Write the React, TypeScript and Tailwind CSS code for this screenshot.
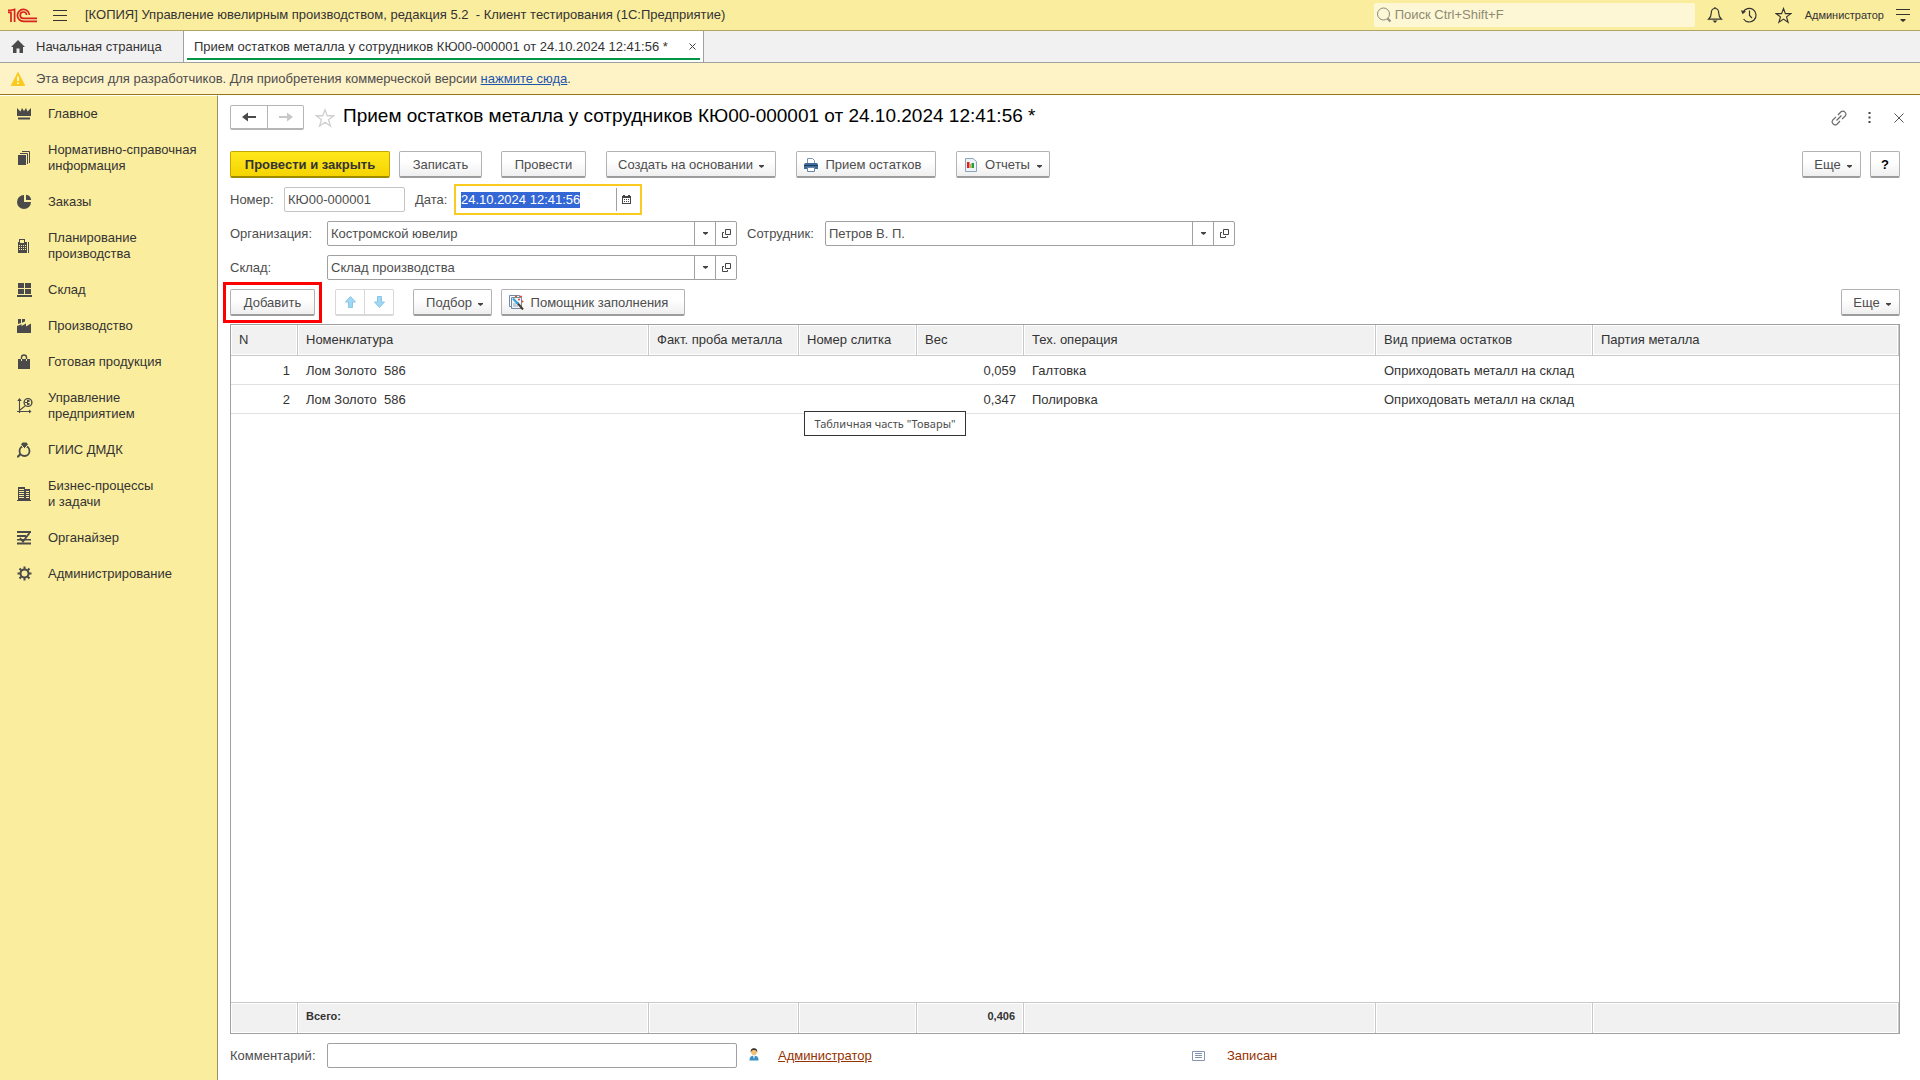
import { useEffect, useRef, type ReactNode } from 'react';

const svgProps = { fill: 'none', xmlns: 'http://www.w3.org/2000/svg' };

function Logo() {
  return (
    <svg {...svgProps} className="h-[15px] w-[30px]" viewBox="0 0 30 15" stroke="#d8231f" strokeWidth="1.7">
      <path d="M0 4.4H3V14M6.6 14V0.5M6.6 1C5.6 2.2 3.5 2.4 0 2.4" />
      <path d="M21.4 7A6 6 0 1 0 15.4 13.4H29" />
      <path d="M18.6 7A3.2 3.2 0 1 0 15.4 10.4H29" />
    </svg>
  );
}

function Caret() {
  return (
    <svg {...svgProps} className="mt-[3px] h-[3px] w-[5px] shrink-0" viewBox="0 0 5 3">
      <path d="M0 0H5V1L2.5 3L0 1Z" fill="#444" />
    </svg>
  );
}

function Star({ className, stroke }: { className: string; stroke: string }) {
  return (
    <svg {...svgProps} className={className} viewBox="0 0 18 18" stroke={stroke} strokeWidth="1.2">
      <path d="M9 1.6L11 7H16.8L12.2 10.5L13.9 16.2L9 12.8L4.1 16.2L5.8 10.5L1.2 7H7Z" />
    </svg>
  );
}

const sectionIcons: Record<string, ReactNode> = {
  crown: <path d="M0 2L3.5 5.5L5 2L7 5L9 2L10.5 5.5L14 2V10H0ZM1 11.5H13V13.5H1Z" />,
  books: (
    <>
      <path d="M1 5H9V15H1Z" />
      <path d="M3 3.5H10.5V14M5 1.5H12.5V13" fill="none" stroke="#4a4a4a" />
    </>
  ),
  pie: <path d="M7 1A7 7 0 1 0 14 8H7ZM9 0.8V6H14.2A6 6 0 0 0 9 0.8Z" />,
  calc: (
    <>
      <path
        fillRule="evenodd"
        d="M2 1H8V4H10V15H1V4H2ZM3 2V5H7V2ZM2 7V8H3V7ZM4 7V8H5V7ZM6 7V8H7V7ZM8 7V8H9V7ZM2 9V10H3V9ZM4 9V10H5V9ZM6 9V10H7V9ZM8 9V10H9V9ZM2 11V12H3V11ZM4 11V12H5V11ZM6 11V12H7V11ZM8 11V12H9V11Z"
      />
      <path d="M11 4H12V15H11Z" />
    </>
  ),
  boxes: <path d="M1 1H7V6H1ZM8 1H14V6H8ZM1 7H7V12H1ZM8 7H14V12H8ZM0 13H15V15H0Z" />,
  factory: <path d="M0 15V8L4.5 6.3V8L9 5.5V8.5L14 5.5V15ZM1 1H4V5L1 6ZM5 1H8V3.5L5 4.8Z" />,
  bag: (
    <>
      <path d="M1 5H13V15H1Z" />
      <path d="M4.5 5V3.5A2.5 2.5 0 0 1 9.5 3.5V5" fill="none" stroke="#4a4a4a" strokeWidth="1.4" />
      <path d="M4.5 5V7M9.5 5V7" stroke="#fbed9e" />
    </>
  ),
  chart: (
    <>
      <path d="M2.5 15V2M0 13.5H13M3 12L8 8" fill="none" stroke="#4a4a4a" strokeWidth="1.1" />
      <path d="M2.5 0L4.8 3H0.2ZM14.5 13.5L12 11.5V15.5Z" />
      <circle cx="11" cy="4.5" r="3.9" fill="none" stroke="#4a4a4a" strokeWidth="1.4" />
      <path d="M10 2H12.5V4H11V5H12.5V7H10ZM8 4H10V5H8Z" />
    </>
  ),
  ring: (
    <>
      <circle cx="7.5" cy="9" r="5" fill="none" stroke="#4a4a4a" strokeWidth="1.8" />
      <path d="M4.5 3.5L7.5 6.5L10.5 3.5Z" stroke="#fbed9e" />
      <path d="M5.5 0.5H9.5L11 2.5L7.5 5.5L4 2.5ZM0 14L3 11L4.5 12.5L1.5 15.5H0Z" />
    </>
  ),
  building: (
    <path
      fillRule="evenodd"
      d="M1 1H8V3H13V14H14V15H0V14H1ZM2 3V4H7V3ZM2 5V6H7V5ZM2 7V8H7V7ZM2 9V10H7V9ZM2 11V12H7V11ZM9 5V6H12V5ZM9 7V8H12V7ZM9 9V10H12V9ZM9 11V12H12V11Z"
    />
  ),
  organizer: (
    <>
      <path d="M0 1H14V3H0ZM0 5H9V7H0ZM0 9H14V10.5H0ZM0 12.5H14V14.5H0Z" />
      <path d="M3 8L6 11.5L12.5 3" fill="none" stroke="#4a4a4a" strokeWidth="1.8" />
    </>
  ),
  gear: (
    <>
      <circle cx="7.5" cy="7.5" r="4" fill="none" stroke="#4a4a4a" strokeWidth="2" />
      <path
        d="M7.5 0.5V3M7.5 12V14.5M0.5 7.5H3M12 7.5H14.5M2.5 2.5L4.3 4.3M10.7 10.7L12.5 12.5M12.5 2.5L10.7 4.3M4.3 10.7L2.5 12.5"
        stroke="#4a4a4a"
        strokeWidth="2"
      />
    </>
  ),
};

const sections: { icon: string; lines: string[] }[] = [
  { icon: 'crown', lines: ['Главное'] },
  { icon: 'books', lines: ['Нормативно-справочная', 'информация'] },
  { icon: 'pie', lines: ['Заказы'] },
  { icon: 'calc', lines: ['Планирование', 'производства'] },
  { icon: 'boxes', lines: ['Склад'] },
  { icon: 'factory', lines: ['Производство'] },
  { icon: 'bag', lines: ['Готовая продукция'] },
  { icon: 'chart', lines: ['Управление', 'предприятием'] },
  { icon: 'ring', lines: ['ГИИС ДМДК'] },
  { icon: 'building', lines: ['Бизнес-процессы', 'и задачи'] },
  { icon: 'organizer', lines: ['Органайзер'] },
  { icon: 'gear', lines: ['Администрирование'] },
];

function Btn({ children, className = '' }: { children: ReactNode; className?: string }) {
  return (
    <button
      type="button"
      className={`flex h-[27px] shrink-0 items-center justify-center whitespace-nowrap rounded-[2px] border border-b-2 border-[#b2b2b2] border-b-[#9c9c9c] bg-linear-to-b from-white from-40% to-[#efefef] pt-px ${className}`}
    >
      {children}
    </button>
  );
}

function RefField({ id, value }: { id: string; value: string }) {
  return (
    <div className="flex h-[25px] w-[410px] rounded-[2px] border border-[#a0a0a0] bg-white">
      <input id={id} defaultValue={value} className="min-w-0 flex-1 px-[3px] outline-none" />
      <button type="button" aria-label="Выбрать" className="flex w-[21px] items-center justify-center border-l border-[#a0a0a0]">
        <svg {...svgProps} className="h-[3px] w-[5px]" viewBox="0 0 5 3">
          <path d="M0 0H5V1L2.5 3L0 1Z" fill="#444" />
        </svg>
      </button>
      <button type="button" aria-label="Открыть" className="flex w-[21px] items-center justify-center border-l border-[#a0a0a0]">
        <svg {...svgProps} className="size-[9px]" viewBox="0 0 9 9" stroke="#444">
          <path d="M3.5 0.5H8.5V5.5H3.5ZM2 3.5H0.5V8.5H5.5V7" />
        </svg>
      </button>
    </div>
  );
}

const columns = [
  { title: 'N', width: 'w-[67px]' },
  { title: 'Номенклатура', width: 'w-[351px]' },
  { title: 'Факт. проба металла', width: 'w-[150px]' },
  { title: 'Номер слитка', width: 'w-[118px]' },
  { title: 'Вес', width: 'w-[107px]' },
  { title: 'Тех. операция', width: 'w-[352px]' },
  { title: 'Вид приема остатков', width: 'w-[217px]' },
  { title: 'Партия металла', width: '' },
];

const rows = [
  ['1', 'Лом Золото  586', '', '', '0,059', 'Галтовка', 'Оприходовать металл на склад', ''],
  ['2', 'Лом Золото  586', '', '', '0,347', 'Полировка', 'Оприходовать металл на склад', ''],
];

const totals = ['', 'Всего:', '', '', '0,406', '', '', ''];

export default function App() {
  const dateRef = useRef<HTMLInputElement>(null);
  useEffect(() => {
    dateRef.current?.focus();
    dateRef.current?.select();
  }, []);

  return (
    <div className="flex h-screen flex-col overflow-hidden bg-white font-['Liberation_Sans',Arial,sans-serif] text-[13px] leading-4 text-[#4d4d4d]">
      <header className="flex h-[31px] shrink-0 items-center border-b border-[#b0a565] bg-[#fbed9e] px-2 text-[#333]">
        <Logo />
        <button type="button" aria-label="Меню" className="ml-[15px]">
          <svg {...svgProps} className="h-[11px] w-[14px]" viewBox="0 0 14 11" stroke="#333">
            <path d="M0 0.5H14M0 5.5H14M0 10.5H14" />
          </svg>
        </button>
        <span className="ml-[18px] whitespace-pre">
          [КОПИЯ] Управление ювелирным производством, редакция 5.2  - Клиент тестирования (1С:Предприятие)
        </span>
        <label className="ml-auto flex h-6 w-[321px] items-center rounded-[2px] bg-[#fdf7d5] pl-[2px]">
          <svg {...svgProps} className="size-[16px] shrink-0" viewBox="0 0 16 16" stroke="#8d8a78">
            <circle cx="7.5" cy="7" r="6" />
            <path d="M11.5 11.5L14.5 14.5" strokeWidth="2" />
          </svg>
          <input
            aria-label="Поиск"
            placeholder="Поиск Ctrl+Shift+F"
            className="ml-[3px] min-w-0 flex-1 outline-none placeholder:text-[#8f8b73]"
          />
        </label>
        <button type="button" aria-label="Уведомления" className="ml-[12px]">
          <svg {...svgProps} className="size-[16px]" viewBox="0 0 16 16" stroke="#333" strokeWidth="1.2">
            <path d="M8 1.5C5 1.5 4.2 4 4.2 6.5C4.2 9.5 3 11 1.5 12.2H14.5C13 11 11.8 9.5 11.8 6.5C11.8 4 11 1.5 8 1.5ZM8 0V1.5" />
            <path d="M5.5 13.5H10.5L8 16Z" fill="#333" stroke="none" />
          </svg>
        </button>
        <button type="button" aria-label="История" className="ml-[18px]">
          <svg {...svgProps} className="size-[16px]" viewBox="0 0 16 16" stroke="#333" strokeWidth="1.2">
            <path d="M2 5.5A6.8 6.8 0 1 1 2.6 12M8.5 3.5V8.5L11 11" />
            <path d="M0 3.2L5 4.5L1.5 7.2Z" fill="#333" stroke="none" />
          </svg>
        </button>
        <button type="button" aria-label="Избранное" className="ml-[18px]">
          <Star className="size-[17px]" stroke="#333" />
        </button>
        <span className="ml-[13px] text-[11px]">Администратор</span>
        <button type="button" aria-label="Настройки" className="mr-[2px] ml-[12px]">
          <svg {...svgProps} className="h-[14px] w-[14px]" viewBox="0 0 14 14" stroke="#333">
            <path d="M0 1.5H14M0 6.5H14" />
            <path d="M4.5 11H9.5V12L7 14L4.5 12Z" fill="#333" stroke="none" />
          </svg>
        </button>
      </header>

      <nav className="flex h-8 shrink-0 border-b border-[#a0a0a0] bg-[#f1f1f1] text-[#333]">
        <a href="#home" className="flex w-[184px] items-center border-r border-[#a0a0a0] pl-[11px]">
          <svg {...svgProps} className="mr-[11px] h-[13px] w-[14px]" viewBox="0 0 14 13" fill="#4a4a4a">
            <path d="M7 0L14 7H12V13H8.5V8.5H5.5V13H2V7H0Z" />
          </svg>
          Начальная страница
        </a>
        <div className="flex border-r border-[#a0a0a0] bg-white px-[3px] pb-[2px]">
          <div className="flex items-center border-b-2 border-[#009646] pt-1 pr-[2px] pl-[7px]">
            <a href="#doc">Прием остатков металла у сотрудников КЮ00-000001 от 24.10.2024 12:41:56 *</a>
            <button type="button" aria-label="Закрыть вкладку" className="ml-[19px] p-[2px]">
              <svg {...svgProps} className="size-[7px]" viewBox="0 0 7 7" stroke="#444">
                <path d="M0.5 0.5L6.5 6.5M6.5 0.5L0.5 6.5" />
              </svg>
            </button>
          </div>
        </div>
      </nav>

      <div className="flex h-8 shrink-0 items-center border-b border-[#94791c] bg-[#fef2c7] pl-[11px]">
        <svg {...svgProps} className="mr-[11px] h-[14px] w-[14px]" viewBox="0 0 14 14">
          <path d="M7 0.5L13.7 13.5H0.3Z" fill="#fbca1e" stroke="#fbca1e" strokeLinejoin="round" />
          <path d="M7 4.5V9M7 10.5V12" stroke="#fff" strokeWidth="1.6" />
        </svg>
        <p>
          Эта версия для разработчиков. Для приобретения коммерческой версии{' '}
          <a href="#buy" className="text-[#1c55ae] underline">
            нажмите сюда
          </a>
          .
        </p>
      </div>

      <div className="flex min-h-0 flex-1">
        <aside className="w-[218px] shrink-0 border-t border-r border-t-white border-r-[#99915f] bg-[#fbed9e] text-[#333]">
          <ul>
            {sections.map((s) => (
              <li key={s.icon}>
                <a href={`#${s.icon}`} className="flex items-center py-[10px] pl-[17px]">
                  <svg {...svgProps} className="mr-[15px] size-4 shrink-0" viewBox="0 0 16 16" fill="#4a4a4a">
                    {sectionIcons[s.icon]}
                  </svg>
                  <span>
                    {s.lines.map((l) => (
                      <span key={l} className="block">
                        {l}
                      </span>
                    ))}
                  </span>
                </a>
              </li>
            ))}
          </ul>
        </aside>

        <main className="flex min-w-0 flex-1 flex-col pt-[10px] pr-5 pb-[12px] pl-3">
          <div className="flex items-center">
            <div className="flex h-[25px] rounded-[2px] border border-b-2 border-[#b5b5b5]">
              <button type="button" aria-label="Назад" className="flex w-[37px] items-center justify-center border-r border-[#b5b5b5]">
                <svg {...svgProps} className="h-[10px] w-[14px]" viewBox="0 0 14 10">
                  <path d="M14 4H6V0.5L0 5L6 9.5V6H14Z" fill="#4a4a4a" />
                </svg>
              </button>
              <button type="button" aria-label="Вперед" className="flex w-[35px] items-center justify-center">
                <svg {...svgProps} className="h-[10px] w-[14px]" viewBox="0 0 14 10">
                  <path d="M0 4H8V0.5L14 5L8 9.5V6H0Z" fill="#c8c8c8" />
                </svg>
              </button>
            </div>
            <button type="button" aria-label="В избранное" className="ml-[11px]">
              <Star className="size-5" stroke="#d0d0d0" />
            </button>
            <h1 className="ml-[8px] pb-[3px] text-[19px] leading-[22px] text-black">
              Прием остатков металла у сотрудников КЮ00-000001 от 24.10.2024 12:41:56 *
            </h1>
            <button type="button" aria-label="Ссылка" className="ml-auto">
              <svg {...svgProps} className="size-4" viewBox="0 0 16 16" stroke="#6a6a6a" strokeWidth="1.2">
                <path d="M5.5 10.5L10.5 5.5M7 5L10 1.8A3 3 0 0 1 14.2 6L11 9.2M9 11L6 14.2A3 3 0 0 1 1.8 10L5 6.8" />
              </svg>
            </button>
            <button type="button" aria-label="Действия" className="ml-[21px]">
              <svg {...svgProps} className="h-[11px] w-[3px]" viewBox="0 0 3 11" fill="#444">
                <path d="M0.5 0H2.5V2H0.5ZM0.5 4.5H2.5V6.5H0.5ZM0.5 9H2.5V11H0.5Z" />
              </svg>
            </button>
            <button type="button" aria-label="Закрыть" className="mr-[-4px] ml-[23px]">
              <svg {...svgProps} className="size-[10px]" viewBox="0 0 10 10" stroke="#555">
                <path d="M0.5 0.5L9.5 9.5M9.5 0.5L0.5 9.5" />
              </svg>
            </button>
          </div>

          <div className="mt-[21px] flex">
            <button
              type="button"
              className="h-[27px] w-[160px] rounded-[2px] border border-b-2 border-[#c2a800] border-b-[#a08b00] bg-linear-to-b from-[#ffe81a] to-[#f5d400] pt-px font-bold text-[#333]"
            >
              Провести и закрыть
            </button>
            <Btn className="ml-[9px] w-[83px]">Записать</Btn>
            <Btn className="ml-[19px] w-[85px]">Провести</Btn>
            <Btn className="ml-5 w-[170px] gap-[6px]">
              Создать на основании
              <Caret />
            </Btn>
            <Btn className="ml-5 w-[140px] gap-[7px] pr-[6px]">
              <svg {...svgProps} className="size-[14px]" viewBox="0 0 14 14">
                <path d="M3.5 6V0.5H8.5L10.5 2.5V6" fill="#fff" stroke="#7d93ac" />
                <path d="M1 5H13L14 6.5V11H0V6.5Z" fill="#3f6a96" />
                <path d="M0 7.5H14" stroke="#1d3f63" />
                <path d="M3.5 9.5H10.5V13.5H3.5Z" fill="#fff" stroke="#6a86a5" />
              </svg>
              Прием остатков
            </Btn>
            <Btn className="ml-5 w-[94px] gap-[7px]">
              <svg {...svgProps} className="size-[14px]" viewBox="0 0 14 14">
                <path d="M1.5 0.5H9L12.5 3.5V13.5H1.5Z" fill="#eef3f8" stroke="#8fa3b8" />
                <path d="M3 4H5.5V10H3Z" fill="#e02020" />
                <path d="M6 6H7V10H6Z" fill="#f0a020" />
                <path d="M7.5 5H10V10H7.5Z" fill="#20a040" />
              </svg>
              Отчеты
              <Caret />
            </Btn>
            <Btn className="ml-auto w-[59px] gap-[6px] pl-[3px]">
              Еще
              <Caret />
            </Btn>
            <Btn className="ml-[9px] w-[30px] font-bold text-black">?</Btn>
          </div>

          <div className="mt-[6px] flex items-center">
            <label htmlFor="number" className="w-[54px]">
              Номер:
            </label>
            <input
              id="number"
              defaultValue="КЮ00-000001"
              className="h-[25px] w-[121px] rounded-[2px] border border-[#c4c4c4] px-[3px] outline-none"
            />
            <label htmlFor="date" className="ml-[10px] w-[39px]">
              Дата:
            </label>
            <div className="flex h-[31px] w-[188px] border-2 border-[#fbca1e] p-[2px]">
              <input
                id="date"
                ref={dateRef}
                defaultValue="24.10.2024 12:41:56"
                className="min-w-0 flex-1 px-[3px] outline-none selection:bg-[#3367d6] selection:text-white"
              />
              <button type="button" aria-label="Календарь" className="flex w-[22px] items-center justify-center border-l border-[#a0a0a0] pr-[2px]">
                <svg {...svgProps} className="size-[9px]" viewBox="0 0 9 9">
                  <path
                    fillRule="evenodd"
                    fill="#444"
                    d="M1 0H3V1H6V0H8V1H9V9H0V1H1ZM1 3V8H8V3ZM2 4H3V5H2ZM4 4H5V5H4ZM6 4H7V5H6ZM2 6H3V7H2ZM4 6H5V7H4ZM6 6H7V7H6Z"
                  />
                </svg>
              </button>
            </div>
          </div>

          <div className="mt-[6px] flex items-center">
            <label htmlFor="org" className="w-[97px]">
              Организация:
            </label>
            <RefField id="org" value="Костромской ювелир" />
            <label htmlFor="employee" className="ml-[10px] w-[78px]">
              Сотрудник:
            </label>
            <RefField id="employee" value="Петров В. П." />
          </div>

          <div className="mt-[9px] flex items-center">
            <label htmlFor="store" className="w-[97px]">
              Склад:
            </label>
            <RefField id="store" value="Склад производства" />
          </div>

          <div className="mt-[9px] flex">
            <div className="outline-3 outline-offset-4 outline-[#f00]">
              <Btn className="w-[85px]">Добавить</Btn>
            </div>
            <div className="ml-5 flex h-[27px] rounded-[2px] border border-b-2 border-[#d8d8d8]">
              <button type="button" aria-label="Вверх" className="flex w-[29px] items-center justify-center border-r border-[#d8d8d8]">
                <svg {...svgProps} className="h-3 w-[11px]" viewBox="0 0 11 12">
                  <path d="M5.5 0.5L10.5 6H7.5V11.5H3.5V6H0.5Z" fill="#9fd8f5" stroke="#8cc4e4" />
                </svg>
              </button>
              <button type="button" aria-label="Вниз" className="flex w-[28px] items-center justify-center">
                <svg {...svgProps} className="h-3 w-[11px]" viewBox="0 0 11 12">
                  <path d="M5.5 11.5L10.5 6H7.5V0.5H3.5V6H0.5Z" fill="#9fd8f5" stroke="#8cc4e4" />
                </svg>
              </button>
            </div>
            <Btn className="ml-[19px] w-[79px] gap-[6px] pl-1">
              Подбор
              <Caret />
            </Btn>
            <Btn className="ml-[9px] w-[184px] gap-[7px] pr-[9px]">
              <svg {...svgProps} className="size-[15px]" viewBox="0 0 15 15">
                <path d="M0.5 0.5H10.5V11.5H0.5Z" fill="#fff" stroke="#6f8ba6" />
                <path d="M2.5 2.5H12.5V13.5H2.5Z" fill="#f2f6fa" stroke="#6f8ba6" />
                <path d="M4 9H7M4 11H9" stroke="#8fa8c0" />
                <path d="M8 7.5L14 14.5" stroke="#4a3a28" strokeWidth="2" />
                <path d="M4 3.5L9 9" stroke="#35a0d8" strokeWidth="2" />
                <path d="M6 1.5H8M7 0.5V2.5M11 1.5H13M12 0.5V2.5M9 4.5H11M10 3.5V5.5M12.5 6.5H14.5M13.5 5.5V7.5" stroke="#f04a28" />
              </svg>
              Помощник заполнения
            </Btn>
            <Btn className="ml-auto w-[59px] gap-[6px] pl-[3px]">
              Еще
              <Caret />
            </Btn>
          </div>

          <div className="relative mt-2 flex min-h-0 flex-1 border border-[#a0a0a0]">
            <table className="h-full w-full table-fixed border-separate border-spacing-0 text-[#333]">
              <thead>
                <tr>
                  {columns.map((c) => (
                    <th
                      key={c.title}
                      className={`h-[31px] border-r border-b border-[#c8c8c8] bg-[#f1f1f1] px-2 text-left font-normal whitespace-nowrap ring-1 ring-white ring-inset ${c.width}`}
                    >
                      {c.title}
                    </th>
                  ))}
                </tr>
              </thead>
              <tbody>
                {rows.map((r) => (
                  <tr key={r[0]}>
                    {r.map((cell, i) => (
                      <td
                        key={columns[i].title}
                        className={`h-[29px] border-b border-[#e2e2e2] px-2 pt-[2px] whitespace-pre ${i === 0 || i === 4 ? 'text-right' : ''}`}
                      >
                        {cell}
                      </td>
                    ))}
                  </tr>
                ))}
                <tr>
                  <td colSpan={8} />
                </tr>
              </tbody>
              <tfoot>
                <tr>
                  {totals.map((t, i) => (
                    <td
                      key={columns[i].title}
                      className={`h-[31px] border-t border-r border-[#c8c8c8] bg-[#f1f1f1] px-2 pb-1 text-[11px] font-bold ring-1 ring-white ring-inset ${i === 4 ? 'text-right' : ''}`}
                    >
                      {t}
                    </td>
                  ))}
                </tr>
              </tfoot>
            </table>
            <div
              role="tooltip"
              className="absolute top-[86px] left-[573px] flex h-[25px] w-[162px] items-center justify-center border border-[#333] bg-white font-['Noto_Sans',sans-serif] text-[11px] whitespace-nowrap"
            >
              Табличная часть "Товары"
            </div>
          </div>

          <div className="mt-[9px] flex items-center">
            <label htmlFor="comment" className="w-[97px]">
              Комментарий:
            </label>
            <input id="comment" className="h-[25px] w-[410px] rounded-[2px] border border-[#a0a0a0] px-[3px] outline-none" />
            <svg {...svgProps} className="mb-[2px] ml-[12px] h-[13px] w-[10px]" viewBox="0 0 10 13">
              <path d="M0.5 12.5C0.5 9 2 7.8 5 7.8S9.5 9 9.5 12.5Z" fill="#3c8fc4" />
              <path d="M4 7.5H6L5 11Z" fill="#fff" />
              <circle cx="5" cy="4.2" r="2.8" fill="#f0c070" />
              <path d="M1.8 4.5C1.3 1.5 3 0.3 5 0.3S8.7 1.5 8.2 4.5C7.5 2.5 6.5 2 5 2S2.5 2.5 1.8 4.5Z" fill="#3a3228" />
            </svg>
            <a href="#author" className="ml-[19px] w-[414px] text-[#963200] underline">
              Администратор
            </a>
            <svg {...svgProps} className="h-[10px] w-[13px]" viewBox="0 0 13 10" stroke="#8496ae">
              <path d="M0.5 0.5H12.5V9.5H0.5ZM3 2.5H10M3 4.5H10M3 6.5H10" />
            </svg>
            <span className="ml-[22px] text-[#963200]">Записан</span>
          </div>
        </main>
      </div>
    </div>
  );
}
